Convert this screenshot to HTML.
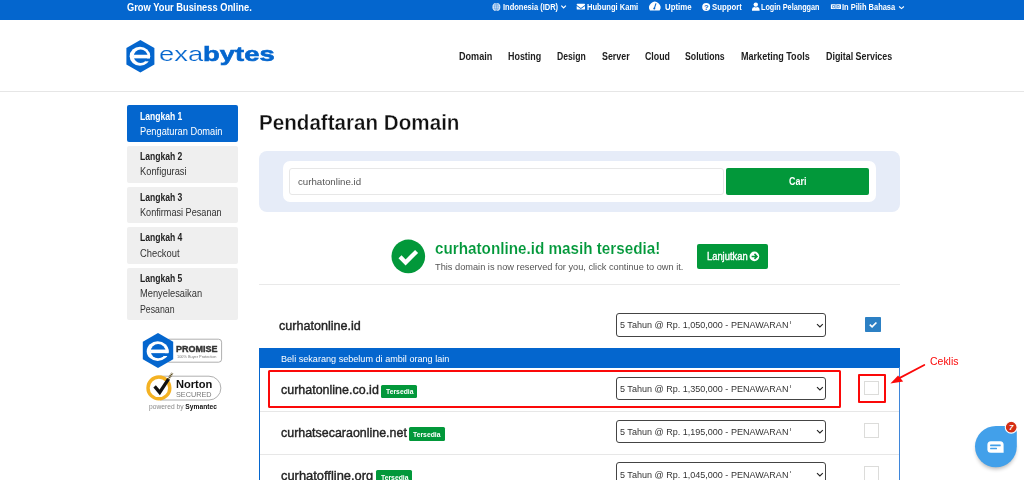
<!DOCTYPE html>
<html lang="id">
<head>
<meta charset="utf-8">
<title>Pendaftaran Domain - Exabytes</title>
<style>
*{box-sizing:border-box;margin:0;padding:0}
html,body{width:1024px;height:480px;overflow:hidden;background:#fff}
body{font-family:"Liberation Sans",sans-serif;color:#222;position:relative}
.a{position:absolute}
.t{position:absolute;white-space:nowrap;transform-origin:0 0;line-height:1}
.step{left:126.6px;width:111.5px;background:#efefef;border-radius:2px}
.sel{left:615.8px;width:210px;height:23.4px;border:1px solid #444;border-radius:3px;background:#fff}
.cb{left:864px;width:15.4px;height:14.9px;border:1px solid #dcdcda;background:#fff}
.sep{left:260px;width:639px;height:1px;background:#e7e7e7}
.bdg{height:13.2px;width:36px;background:#02983a;border-radius:1.5px}
</style>
</head>
<body>
<!-- top bar -->
<div class="a" style="left:0;top:0;width:1024px;height:20.3px;background:#0466ce"></div>
<!-- header -->
<div class="a" style="left:0;top:91px;width:1024px;height:1px;background:#e6e6e6"></div>
<svg class="a" style="left:126px;top:40px" width="29" height="33" viewBox="0 0 29 33">
  <polygon points="14.4,0.1 28.4,8.1 28.4,24.4 14.4,32.4 0.4,24.4 0.4,8.1" fill="#0466ce"/>
  <ellipse cx="13.95" cy="16.25" rx="10.30" ry="9.45" fill="#fff"/><ellipse cx="14.65" cy="16.25" rx="6.85" ry="6.65" fill="#0466ce"/><rect x="19.45" y="18.35" width="5.80" height="2.95" fill="#0466ce"/><rect x="7.30" y="14.75" width="16.64" height="3.60" fill="#fff"/>
</svg>
<div class="t" style="left:159.4px;top:40.5px;font-size:21px;line-height:26px;color:#0466ce;transform:scaleX(1.303)"><span style="-webkit-text-stroke:0.2px #fff">exa</span><b style="-webkit-text-stroke:0.6px #0466ce">bytes</b></div>

<div class="a step" style="top:105px;height:37.3px;background:#0466ce"></div>
<div class="a step" style="top:146px;height:37px"></div>
<div class="a step" style="top:186.6px;height:36.8px"></div>
<div class="a step" style="top:227px;height:36.8px"></div>
<div class="a step" style="top:267.5px;height:52px"></div>
<!-- search panel -->
<div class="a" style="left:258.7px;top:150.8px;width:641px;height:61.2px;background:#e6ecf8;border-radius:8px"></div>
<div class="a" style="left:282.8px;top:161.2px;width:593.2px;height:40.5px;background:#fff;border-radius:7px"></div>
<div class="a" style="left:288.8px;top:168.2px;width:435px;height:26.6px;border:1px solid #e7e7e7;border-radius:3px;background:#fff"></div>
<div class="a" style="left:726px;top:168.2px;width:143.2px;height:26.6px;background:#02983a;border-radius:2px"></div>
<!-- availability -->
<svg class="a" style="left:390.5px;top:239.2px" width="35" height="35" viewBox="0 0 35 35">
  <circle cx="17.3" cy="17.4" r="16.8" fill="#02983a"/>
  <path d="M9 17.8 L14.6 23.4 L25.6 12.4" fill="none" stroke="#fff" stroke-width="4.3"/>
</svg>
<div class="a" style="left:697.2px;top:244.3px;width:70.8px;height:24.6px;background:#02983a;border-radius:2px"></div>
<svg class="a" style="left:749.1px;top:250.5px" width="11" height="11" viewBox="0 0 11 11">
  <circle cx="5.4" cy="5.4" r="4.85" fill="#fff"/>
  <path d="M2.6 5.4 H8 M5.5 2.9 L8 5.4 L5.5 7.9" fill="none" stroke="#02983a" stroke-width="1.5"/>
</svg>
<div class="a" style="left:259px;top:284px;width:641px;height:1px;background:#e9e9e9"></div>

<div class="a" style="left:259px;top:347.5px;width:640.7px;height:20.2px;background:#0466ce"></div>
<div class="a" style="left:258.8px;top:367px;width:1.5px;height:113px;background:#0466ce"></div>
<div class="a" style="left:898.6px;top:367px;width:1.2px;height:113px;background:#3f86da"></div>
<div class="a sep" style="top:410.6px"></div>
<div class="a sep" style="top:454px"></div>
<div class="a sel" style="top:313.2px"><svg class="a" style="left:199.2px;top:8.4px" width="8" height="6" viewBox="0 0 8 6"><path d="M1 1.2 L3.9 3.9 L6.8 1.2" fill="none" stroke="#222" stroke-width="1.15"/></svg></div>
<div class="a sel" style="top:377px"><svg class="a" style="left:199.2px;top:8.4px" width="8" height="6" viewBox="0 0 8 6"><path d="M1 1.2 L3.9 3.9 L6.8 1.2" fill="none" stroke="#222" stroke-width="1.15"/></svg></div>
<div class="a sel" style="top:420px"><svg class="a" style="left:199.2px;top:8.4px" width="8" height="6" viewBox="0 0 8 6"><path d="M1 1.2 L3.9 3.9 L6.8 1.2" fill="none" stroke="#222" stroke-width="1.15"/></svg></div>
<div class="a sel" style="top:462.3px"><svg class="a" style="left:199.2px;top:8.4px" width="8" height="6" viewBox="0 0 8 6"><path d="M1 1.2 L3.9 3.9 L6.8 1.2" fill="none" stroke="#222" stroke-width="1.15"/></svg></div>
<div class="a" style="left:790.4px;top:321.4px;width:0.9px;height:2.4px;background:#888"></div>
<div class="a" style="left:790.4px;top:385.3px;width:0.9px;height:2.4px;background:#888"></div>
<div class="a" style="left:790.4px;top:428.3px;width:0.9px;height:2.4px;background:#888"></div>
<div class="a" style="left:790.4px;top:470.6px;width:0.9px;height:2.4px;background:#888"></div>
<div class="a" style="left:865.2px;top:317.3px;width:15.8px;height:14.8px;background:#2c80c4;border-radius:0.8px"></div>
<svg class="a" style="left:865px;top:317px" width="16" height="16" viewBox="0 0 16 16"><path d="M4.8 7.6 L7.1 9.9 L11.4 5.5" fill="none" stroke="#fff" stroke-width="1.7"/></svg>
<div class="a cb" style="top:380.6px"></div>
<div class="a cb" style="top:423.4px"></div>
<div class="a cb" style="top:466px"></div>
<div class="a bdg" style="left:381.2px;top:384.6px"></div>
<div class="a bdg" style="left:408.8px;top:427.4px"></div>
<div class="a bdg" style="left:375.8px;top:470.2px"></div>
<div class="a" style="left:267.5px;top:370.2px;width:573.8px;height:37.7px;border-radius:1.5px;border:2.4px solid #fb0909"></div>
<div class="a" style="left:857.9px;top:374.1px;width:28.3px;height:29.4px;border-radius:1px;border:2.4px solid #fb0909"></div>
<svg class="a" style="left:885px;top:355px" width="50" height="35" viewBox="0 0 50 35">
  <path d="M39.3 10 L12 24.4" stroke="#fb0909" stroke-width="1.8" stroke-linecap="round" fill="none"/>
  <polygon points="5.4,28.6 13.1,20.5 18.2,26.4" fill="#fb0909"/>
</svg>
<svg class="a" style="left:488px;top:0" width="430" height="20" viewBox="488 0 430 20">
  <g fill="#fff" stroke="none">
    <circle cx="496.4" cy="6.9" r="3.95"/>
    <path d="M576.7 4.3 Q576.7 3.7 577.3 3.7 H584.4 Q585 3.7 585 4.3 V4.9 L580.85 7.9 L576.7 4.9 Z M576.7 5.9 L580.85 8.9 L585 5.9 V9 Q585 9.6 584.4 9.6 H577.3 Q576.7 9.6 576.7 9 Z"/>
    <path d="M649.95 10.5 A5.7 5.7 0 1 1 659.65 10.5 Z"/>
    <circle cx="706.2" cy="6.9" r="4"/>
    <circle cx="755.8" cy="4.6" r="2.2"/>
    <path d="M752 10.8 V9.4 Q752 7.2 754.2 7 Q755.8 7.9 757.4 7 Q759.6 7.2 759.6 9.4 V10.8 Z"/>
    <rect x="830.9" y="4.2" width="10.1" height="4.9" rx="0.6"/>
  </g>
  <g fill="none" stroke="#0466ce" stroke-width="0.42">
    <path d="M492.5 6.9 H500.3 M496.4 3 V10.8 M493.1 5 H499.7 M493.1 8.8 H499.7"/>
    <ellipse cx="496.4" cy="6.9" rx="1.8" ry="3.9"/>
  </g>
  <path d="M654.2 8.8 L656 3.4" stroke="#0466ce" stroke-width="1.1" fill="none"/>
  <circle cx="654.3" cy="8.6" r="1" fill="#0466ce"/>
  <text x="706.2" y="9.6" font-family="Liberation Sans, sans-serif" font-size="7.4" font-weight="bold" fill="#0466ce" text-anchor="middle">?</text>
  <path d="M832.6 5.5 h2 v2.3 h-2 z M837.2 5.5 h2 v2.3 h-2z M835.95 4.2 V9.1" stroke="#0466ce" stroke-width="0.6" fill="none"/>
  <path d="M561.3 5.7 L563.6 8 L565.9 5.7" stroke="#fff" stroke-width="1.2" fill="none"/>
  <path d="M899.1 6.5 L901.5 8.6 L903.9 6.5" stroke="#fff" stroke-width="1.1" fill="none"/>
</svg>
<svg class="a" style="left:140px;top:330px" width="86" height="74" viewBox="140 330 86 74">
  <rect x="166" y="339.2" width="55.6" height="23" rx="3" fill="#fff" stroke="#9a9a9a" stroke-width="0.8"/>
  <polygon points="158,333 173.2,341.8 173.2,359.3 158,368 142.8,359.3 142.8,341.8" fill="#0466ce"/>
  <ellipse cx="157.70" cy="351.15" rx="11.00" ry="9.85" fill="#fff"/><ellipse cx="158.15" cy="351.15" rx="7.35" ry="7.10" fill="#0466ce"/><rect x="163.30" y="353.15" width="6.40" height="2.85" fill="#0466ce"/><rect x="150.30" y="349.55" width="18.12" height="3.60" fill="#fff"/>
  <path d="M160 376.2 H209 A11.9 11.9 0 0 1 209 400 H160" fill="#fff" stroke="#9a9a9a" stroke-width="0.8"/>
  <circle cx="158.9" cy="387.9" r="10.9" fill="#fff" stroke="#f4b223" stroke-width="3.4"/>
  <path d="M154.6 386.4 L159.7 392.4 L168.6 378.8" fill="none" stroke="#111" stroke-width="3.3"/>
  <path d="M168.2 379.4 L172.4 373" fill="none" stroke="#5a4a1a" stroke-width="2.2" stroke-dasharray="1.1 0.7"/>
</svg>
<svg class="a" style="left:964px;top:414px" width="60" height="66" viewBox="964 414 60 66">
  <defs><filter id="sh" x="-30%" y="-30%" width="160%" height="170%"><feGaussianBlur stdDeviation="2.2"/></filter></defs>
  <circle cx="995.9" cy="449.6" r="19.5" fill="#000" opacity="0.3" filter="url(#sh)"/>
  <path d="M995.9 425.9 H1010.3 A6.5 6.5 0 0 1 1016.8 432.4 V446.6 A20.9 20.7 0 0 1 975 446.6 A20.9 20.7 0 0 1 995.9 425.9 Z" fill="#42a0ea"/>
  <path d="M990.9 441.2 H1000.1 A3.5 3.5 0 0 1 1003.6 444.7 V452.8 H990.9 A3.5 3.5 0 0 1 987.4 449.3 V444.7 A3.5 3.5 0 0 1 990.9 441.2 Z" fill="#fff"/>
  <rect x="990.1" y="444.6" width="10.6" height="1.6" rx="0.5" fill="#42a0ea"/>
  <rect x="990.1" y="447.7" width="6.9" height="1.5" rx="0.5" fill="#42a0ea"/>
  <circle cx="1011.2" cy="427.2" r="5.9" fill="#d62f14" stroke="#fff" stroke-width="1.1"/>
  <text x="1011.2" y="430.1" font-family="Liberation Sans, sans-serif" font-size="7.8" font-weight="bold" font-style="italic" fill="#fff" text-anchor="middle">7</text>
</svg>
<div id="tag" class="t" style="left:127.3px;top:2.00px;transform:scaleX(0.878);font-size:10.6px;font-weight:bold;color:#fff;">Grow Your Business Online.</div>
<div id="tb1" class="t" style="left:502.6px;top:3.00px;transform:scaleX(0.854);font-size:8.8px;font-weight:bold;color:#fff;">Indonesia (IDR)</div>
<div id="tb2" class="t" style="left:587.0px;top:3.00px;transform:scaleX(0.859);font-size:8.8px;font-weight:bold;color:#fff;">Hubungi Kami</div>
<div id="tb3" class="t" style="left:665.4px;top:3.00px;transform:scaleX(0.892);font-size:8.8px;font-weight:bold;color:#fff;">Uptime</div>
<div id="tb4" class="t" style="left:712.2px;top:3.00px;transform:scaleX(0.884);font-size:8.8px;font-weight:bold;color:#fff;">Support</div>
<div id="tb5" class="t" style="left:761.3px;top:3.00px;transform:scaleX(0.825);font-size:8.8px;font-weight:bold;color:#fff;">Login Pelanggan</div>
<div id="tb6" class="t" style="left:842.4px;top:3.00px;transform:scaleX(0.850);font-size:8.8px;font-weight:bold;color:#fff;">In Pilih Bahasa</div>
<div id="n1" class="t" style="left:459.4px;top:52.00px;transform:scaleX(0.874);font-size:10.4px;font-weight:bold;color:#1d1d1d;">Domain</div>
<div id="n2" class="t" style="left:508.4px;top:52.00px;transform:scaleX(0.859);font-size:10.4px;font-weight:bold;color:#1d1d1d;">Hosting</div>
<div id="n3" class="t" style="left:557.1px;top:52.00px;transform:scaleX(0.831);font-size:10.4px;font-weight:bold;color:#1d1d1d;">Design</div>
<div id="n4" class="t" style="left:601.6px;top:52.00px;transform:scaleX(0.853);font-size:10.4px;font-weight:bold;color:#1d1d1d;">Server</div>
<div id="n5" class="t" style="left:644.7px;top:52.00px;transform:scaleX(0.849);font-size:10.4px;font-weight:bold;color:#1d1d1d;">Cloud</div>
<div id="n6" class="t" style="left:685.3px;top:52.00px;transform:scaleX(0.839);font-size:10.4px;font-weight:bold;color:#1d1d1d;">Solutions</div>
<div id="n7" class="t" style="left:741.2px;top:52.00px;transform:scaleX(0.871);font-size:10.4px;font-weight:bold;color:#1d1d1d;">Marketing Tools</div>
<div id="n8" class="t" style="left:825.7px;top:52.00px;transform:scaleX(0.855);font-size:10.4px;font-weight:bold;color:#1d1d1d;">Digital Services</div>
<div id="s1a" class="t" style="left:140.4px;top:112.00px;transform:scaleX(0.857);font-size:10px;font-weight:bold;color:#fff;">Langkah 1</div>
<div id="s1b" class="t" style="left:140.4px;top:127.00px;transform:scaleX(0.926);font-size:10px;font-weight:normal;color:#fff;">Pengaturan Domain</div>
<div id="s2a" class="t" style="left:140.4px;top:152.00px;transform:scaleX(0.857);font-size:10px;font-weight:bold;color:#222;">Langkah 2</div>
<div id="s2b" class="t" style="left:140.4px;top:167.00px;transform:scaleX(0.931);font-size:10px;font-weight:normal;color:#333;">Konfigurasi</div>
<div id="s3a" class="t" style="left:140.4px;top:193.00px;transform:scaleX(0.857);font-size:10px;font-weight:bold;color:#222;">Langkah 3</div>
<div id="s3b" class="t" style="left:140.4px;top:208.00px;transform:scaleX(0.912);font-size:10px;font-weight:normal;color:#333;">Konfirmasi Pesanan</div>
<div id="s4a" class="t" style="left:140.4px;top:233.00px;transform:scaleX(0.857);font-size:10px;font-weight:bold;color:#222;">Langkah 4</div>
<div id="s4b" class="t" style="left:140.4px;top:249.00px;transform:scaleX(0.937);font-size:10px;font-weight:normal;color:#333;">Checkout</div>
<div id="s5a" class="t" style="left:140.4px;top:274.00px;transform:scaleX(0.857);font-size:10px;font-weight:bold;color:#222;">Langkah 5</div>
<div id="s5b" class="t" style="left:140.4px;top:289.00px;transform:scaleX(0.931);font-size:10px;font-weight:normal;color:#333;">Menyelesaikan</div>
<div id="s5c" class="t" style="left:140.4px;top:305.00px;transform:scaleX(0.876);font-size:10px;font-weight:normal;color:#333;">Pesanan</div>
<div id="h1" class="t" style="left:259.4px;top:112.00px;transform:scaleX(0.937);font-size:22px;font-weight:bold;color:#111;-webkit-text-stroke:0.3px #fff;">Pendaftaran Domain</div>
<div id="inpt" class="t" style="left:297.8px;top:177.00px;transform:scaleX(1.011);font-size:9.6px;font-weight:normal;color:#555;">curhatonline.id</div>
<div id="carit" class="t" style="left:789.2px;top:177.00px;transform:scaleX(0.894);font-size:10px;font-weight:bold;color:#fff;">Cari</div>
<div id="avail" class="t" style="left:435.0px;top:240.00px;transform:scaleX(0.882);font-size:17.3px;font-weight:bold;color:#02983a;-webkit-text-stroke:0.15px #fff;">curhatonline.id masih tersedia!</div>
<div id="availsub" class="t" style="left:435.0px;top:263.00px;transform:scaleX(0.993);font-size:9.3px;font-weight:normal;color:#555;">This domain is now reserved for you, click continue to own it.</div>
<div id="lanjt" class="t" style="left:706.7px;top:252.00px;transform:scaleX(0.901);font-size:10.4px;font-weight:normal;color:#fff;-webkit-text-stroke:0.35px #fff;">Lanjutkan</div>
<div id="dom0" class="t" style="left:279.4px;top:319.00px;transform:scaleX(0.925);font-size:13.6px;font-weight:normal;color:#242424;-webkit-text-stroke:0.42px #242424;">curhatonline.id</div>
<div id="dom1" class="t" style="left:280.8px;top:383.00px;transform:scaleX(0.918);font-size:13.6px;font-weight:normal;color:#242424;-webkit-text-stroke:0.42px #242424;">curhatonline.co.id</div>
<div id="dom2" class="t" style="left:280.8px;top:426.00px;transform:scaleX(0.915);font-size:13.6px;font-weight:normal;color:#242424;-webkit-text-stroke:0.42px #242424;">curhatsecaraonline.net</div>
<div id="dom3" class="t" style="left:280.8px;top:469.00px;transform:scaleX(0.948);font-size:13.6px;font-weight:normal;color:#242424;-webkit-text-stroke:0.42px #242424;">curhatoffline.org</div>
<div id="bd1" class="t" style="left:385.8px;top:388.00px;transform:scaleX(0.897);font-size:7.6px;font-weight:bold;color:#fff;">Tersedia</div>
<div id="bd2" class="t" style="left:413.4px;top:431.00px;transform:scaleX(0.897);font-size:7.6px;font-weight:bold;color:#fff;">Tersedia</div>
<div id="bd3" class="t" style="left:380.5px;top:474.00px;transform:scaleX(0.897);font-size:7.6px;font-weight:bold;color:#fff;">Tersedia</div>
<div id="ban" class="t" style="left:280.8px;top:354.00px;transform:scaleX(0.970);font-size:9.4px;font-weight:normal;color:#fff;">Beli sekarang sebelum di ambil orang lain</div>
<div id="sel0" class="t" style="left:620.2px;top:320.00px;transform:scaleX(0.963);font-size:9.4px;font-weight:normal;color:#333;">5 Tahun @ Rp. 1,050,000 - PENAWARAN</div>
<div id="sel1" class="t" style="left:620.2px;top:384.00px;transform:scaleX(0.963);font-size:9.4px;font-weight:normal;color:#333;">5 Tahun @ Rp. 1,350,000 - PENAWARAN</div>
<div id="sel2" class="t" style="left:620.2px;top:427.00px;transform:scaleX(0.963);font-size:9.4px;font-weight:normal;color:#333;">5 Tahun @ Rp. 1,195,000 - PENAWARAN</div>
<div id="sel3" class="t" style="left:620.2px;top:470.00px;transform:scaleX(0.963);font-size:9.4px;font-weight:normal;color:#333;">5 Tahun @ Rp. 1,045,000 - PENAWARAN</div>
<div id="prm" class="t" style="left:175.7px;top:345.00px;transform:scaleX(0.979);font-size:9.2px;font-weight:bold;color:#333;-webkit-text-stroke:0.4px #333;">PROMISE</div>
<div id="prm2" class="t" style="left:176.8px;top:356.00px;transform:scaleX(1.074);font-size:3.6px;font-weight:normal;color:#777;">100% Buyer Protection</div>
<div id="nrt" class="t" style="left:175.5px;top:378.00px;transform:scaleX(0.950);font-size:11.7px;font-weight:bold;color:#111;">Norton</div>
<div id="nrt2" class="t" style="left:175.9px;top:392.00px;transform:scaleX(1.056);font-size:6.9px;font-weight:normal;color:#777;">SECURED</div>
<div id="pwr" class="t" style="left:149.3px;top:404.00px;transform:scaleX(1.012);font-size:6.6px;font-weight:normal;color:#888;">powered by <b style="color:#111">Symantec</b></div>
<div id="cek" class="t" style="left:929.6px;top:356.00px;transform:scaleX(0.997);font-size:10.5px;font-weight:normal;color:#fb0909;">Ceklis</div>
</body>
</html>
